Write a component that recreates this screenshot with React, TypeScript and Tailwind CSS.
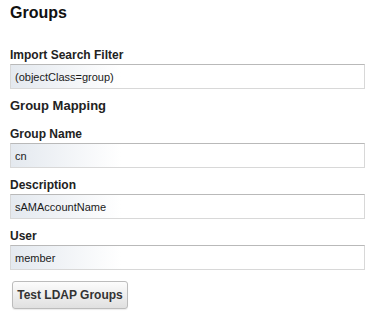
type FieldProps = {
  label: string
  value: string
}

const inputClass =
  "mt-[2px] block h-[25px] w-full border border-[#d8d8d8] border-t-[#b9b9b9] bg-[linear-gradient(90deg,#e4e9ef_0px,#ffffff_110px)] px-[4px] text-[11px] text-[#1a1a1a] outline-none"

function Field({ label, value }: FieldProps) {
  return (
    <div className="mt-[4px]">
      <label className="block text-[12px] font-bold leading-[14px] text-[#222]">{label}</label>
      <input type="text" defaultValue={value} className={inputClass} />
    </div>
  )
}

export default function App() {
  return (
    <div className="min-h-[322px] w-[380px] bg-white pl-[10px] pr-[15px] font-['Liberation_Sans',Arial,sans-serif]">
      <h2 className="pt-[3px] text-[16px] font-bold leading-[20px] text-[#111]">Groups</h2>

      <div className="mt-[25px]">
        <label className="block text-[12px] font-bold leading-[14px] text-[#222]">Import Search Filter</label>
        <input type="text" defaultValue="(objectClass=group)" className={inputClass} />
      </div>

      <h3 className="mt-[9px] text-[13px] font-bold leading-[16px] text-[#222]">Group Mapping</h3>

      <div className="mt-[9px] flex flex-col gap-[6px]">
        <Field label="Group Name" value="cn" />
        <Field label="Description" value="sAMAccountName" />
        <Field label="User" value="member" />
      </div>

      <button
        type="button"
        className="mt-[11px] ml-[2px] h-[28px] w-[116px] rounded-[3px] border border-[#bcbcbc] bg-[linear-gradient(180deg,#fcfcfc,#e0e0e0)] text-[12px] font-bold text-[#333] shadow-[0_1px_1px_rgba(0,0,0,0.08)]"
      >
        Test LDAP Groups
      </button>
    </div>
  )
}
